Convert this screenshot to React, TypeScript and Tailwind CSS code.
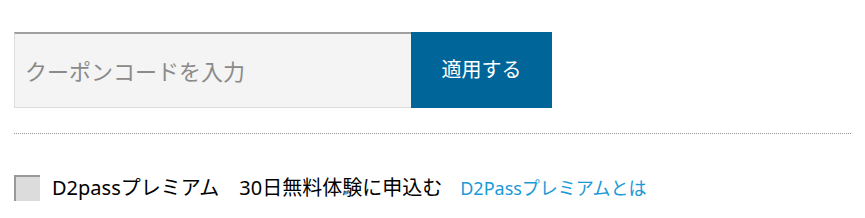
import React from "react";

export default function App() {
  return (
    <div className="h-[218px] w-[865px] bg-white font-['Noto_Sans','Noto_Sans_CJK_JP',sans-serif]">
      <div className="px-[14px] pt-[32px]">
        <div className="flex h-[76px]">
          <input
            type="text"
            placeholder="クーポンコードを入力"
            className="h-full w-[397px] border-t-2 border-l border-b border-t-[#a0a0a0] border-l-[#dcdcdc] border-b-[#dcdcdc] bg-[#f4f4f4] px-[10px] text-[22px] text-[#333] outline-none placeholder:text-[#8a8a8a]"
          />
          <button
            type="button"
            className="h-full w-[141px] bg-[#006699] text-[20px] text-white"
          >
            適用する
          </button>
        </div>
        <div className="mt-[25px] w-[837px] border-t border-dotted border-[#999]" />
        <div className="mt-[39px] flex items-center">
          <span className="block h-[26px] w-[26px] border-t-2 border-l-2 border-[#999] bg-[#dcdcdc]" />
          <span className="ml-[12px] text-[20px] text-black">
            D2passプレミアム　30日無料体験に申込む
          </span>
          <a href="#" className="ml-[18px] text-[18px] text-[#1a9ad6]">
            D2Passプレミアムとは
          </a>
        </div>
      </div>
    </div>
  );
}
